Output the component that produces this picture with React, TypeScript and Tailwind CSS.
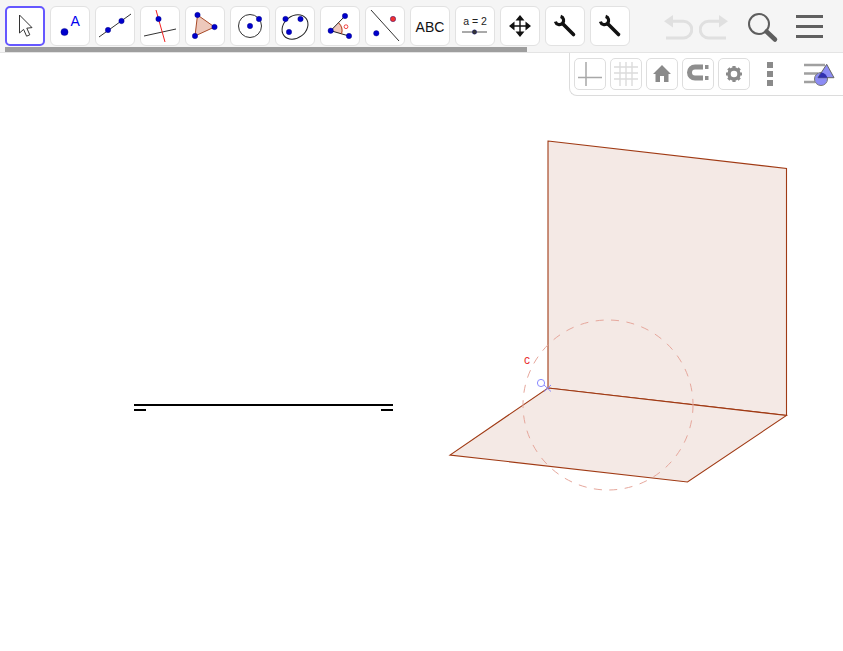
import React from "react";

const B = "#0000cc";
const Dot = ({ x, y, r = 2.7, c = B }: { x: number; y: number; r?: number; c?: string }) => (
  <circle cx={x} cy={y} r={r} fill={c} stroke="#00007a" strokeWidth={0.4} />
);

const Wrench = () => (
  <>
    <path d="M15.6 10.4 A4.2 4.2 0 1 1 10.4 15.6" fill="none" stroke="#111" strokeWidth={3.2} />
    <path d="M18 18 L28.5 28.5" stroke="#111" strokeWidth={3.6} strokeLinecap="round" />
  </>
);

const icons: React.ReactNode[] = [
  <path key="0" d="M14.5 9 L14.5 27 L18.6 23.4 L21.6 30.2 L24.8 28.8 L21.8 22.2 L27 21.6 Z" fill="#fff" stroke="#333" strokeWidth={1} strokeLinejoin="miter" />,
  <g key="1">
    <Dot x={14.5} y={26} r={3.6} />
    <text x={20.5} y={19.5} fontSize={14} fill="#0000ee" fontFamily="Liberation Sans, sans-serif">A</text>
  </g>,
  <g key="2">
    <path d="M4 31 L36 8" stroke="#333" strokeWidth={1} />
    <Dot x={13} y={24} />
    <Dot x={26.5} y={15} />
  </g>,
  <g key="3">
    <path d="M4 30 L36 23" stroke="#333" strokeWidth={1} />
    <path d="M16 4 L25 36" stroke="#f02020" strokeWidth={1} />
    <Dot x={18.5} y={13} />
  </g>,
  <g key="4">
    <path d="M12.5 9 L29.5 21 L10 30 Z" fill="#edc8bb" stroke="#a84a28" strokeWidth={1} />
    <Dot x={12.5} y={9} />
    <Dot x={29.5} y={21} />
    <Dot x={10} y={30} />
  </g>,
  <g key="5">
    <circle cx={20} cy={20} r={11.5} fill="none" stroke="#333" strokeWidth={1} />
    <Dot x={20} y={20} />
    <Dot x={29} y={13} />
  </g>,
  <g key="6">
    <ellipse cx={20} cy={21} rx={14} ry={11} fill="none" stroke="#222" strokeWidth={1} transform="rotate(-38 20 21)" />
    <Dot x={10.5} y={13} />
    <Dot x={25.5} y={13} />
    <Dot x={14} y={26} />
  </g>,
  <g key="7">
    <path d="M10.7 24.7 L19 16.5 A11 11 0 0 1 22 28 Z" fill="#f0c8bc" />
    <path d="M10.7 24.7 L25 10 M10.7 24.7 L29 30" stroke="#222" strokeWidth={1} />
    <path d="M18.5 16.8 A11 11 0 0 1 21.5 28" fill="none" stroke="#b04020" strokeWidth={1} />
    <Dot x={10.7} y={24.7} />
    <Dot x={25} y={10} />
    <Dot x={29} y={30} />
    <circle cx={26} cy={20.7} r={1.9} fill="none" stroke="#f03030" strokeWidth={0.9} />
  </g>,
  <g key="8">
    <path d="M6 4 L34 35" stroke="#333" strokeWidth={1} />
    <Dot x={28} y={13} c="#f03030" />
    <Dot x={11.3} y={27.3} />
  </g>,
  <text key="9" x={20} y={25.5} textAnchor="middle" fontSize={14} fill="#111" fontFamily="Liberation Sans, sans-serif">ABC</text>,
  <g key="10">
    <text x={20} y={19} textAnchor="middle" fontSize={10.5} fill="#222" fontFamily="Liberation Sans, sans-serif">a = 2</text>
    <path d="M7 26 L32 26" stroke="#555" strokeWidth={1} />
    <Dot x={19.5} y={26} c="#333" r={2.2} />
  </g>,
  <g key="11" fill="#111">
    <path d="M20 9 L24.5 14.5 L15.5 14.5 Z M20 31 L24.5 25.5 L15.5 25.5 Z M9 20 L14.5 15.5 L14.5 24.5 Z M31 20 L25.5 15.5 L25.5 24.5 Z" />
    <path d="M20 13 L20 27 M13 20 L27 20" stroke="#111" strokeWidth={1.4} />
  </g>,
  <Wrench key="12" />,
  <Wrench key="13" />,
];

const Undo = ({ flip }: { flip?: boolean }) => (
  <svg viewBox="0 0 30 26" className={flip ? "w-[30px] h-[26px] -scale-x-100" : "w-[30px] h-[26px]"}>
    <path d="M9 7.3 H20.5 A8.3 8.3 0 0 1 20.5 23.9 H3" fill="none" stroke="#e0e0e0" strokeWidth={3} />
    <path d="M1 7.3 L10 1 V13.6 Z" fill="#e0e0e0" />
  </svg>
);

const sub: React.ReactNode[] = [
  <path key="0" d="M4 19.5 H28 M12 4 V28" stroke="#a8a8a8" strokeWidth={1.5} fill="none" />,
  <path key="1" d="M4 9 H28 M4 15 H28 M4 21 H28 M10 4 V28 M16 4 V28 M22 4 V28" stroke="#dcdcdc" strokeWidth={1.4} fill="none" />,
  <path key="2" d="M16 7 L25 16 H22.5 V24 H18 V18 H14 V24 H9.5 V16 H7 Z" fill="#8a8a8a" />,
  <g key="3">
    <path d="M21 9 H13 A5.5 5.5 0 0 0 13 20 H21" fill="none" stroke="#8e8e8e" strokeWidth={5} />
    <path d="M23 7 H26.5 V11 H23 Z M23 18 H26.5 V22 H23 Z" fill="#8e8e8e" />
  </g>,
  <g key="4">
    <circle cx={16} cy={16} r={5} fill="none" stroke="#8a8a8a" strokeWidth={3.4} />
    <path d="M16 8 V10 M16 22 V24 M8 16 H10 M22 16 H24 M10.3 10.3 L11.8 11.8 M20.2 20.2 L21.7 21.7 M21.7 10.3 L20.2 11.8 M11.8 20.2 L10.3 21.7" stroke="#8a8a8a" strokeWidth={3.2} />
  </g>,
];

export default function App() {
  return (
    <div className="relative w-[843px] h-[651px] bg-white overflow-hidden">
      <div className="relative h-[53px] bg-[#f5f5f5] border-b border-[#e4e4e4] flex items-start pt-[6px] pl-[5px]">
        <div className="flex gap-[5px]">
          {icons.map((ic, i) => (
            <div
              key={i}
              className={
                i === 0
                  ? "w-10 h-10 rounded-[5px] bg-white border-2 border-[#6557ff]"
                  : "w-10 h-10 rounded-[6px] bg-white border border-[#e2e2e2]"
              }
            >
              <svg viewBox="0 0 40 40" className={i === 0 ? "w-10 h-10 -m-[2px]" : "w-10 h-10 -m-px"}>
                {ic}
              </svg>
            </div>
          ))}
        </div>
        <div className="ml-[33px] mt-[8px] flex gap-[6px]">
          <Undo />
          <Undo flip />
        </div>
        <svg viewBox="0 0 32 32" className="ml-[18px] mt-[7px] w-8 h-8">
          <circle cx={12} cy={11} r={10} fill="none" stroke="#5e5e5e" strokeWidth={2} />
          <path d="M19.5 18.5 L28 26.5" stroke="#5e5e5e" strokeWidth={4.5} strokeLinecap="round" />
        </svg>
        <div className="ml-[17px] mt-[9px] flex flex-col gap-[7px]">
          <div className="w-[27px] h-[3px] bg-[#606060]" />
          <div className="w-[27px] h-[3px] bg-[#606060]" />
          <div className="w-[27px] h-[3px] bg-[#606060]" />
        </div>
        <div className="absolute left-[5px] top-[47px] w-[522px] h-[5px] bg-[#9e9e9e]" />
      </div>

      <div className="relative h-[598px]">
        <svg viewBox="0 53 843 598" className="absolute inset-0 w-[843px] h-[598px]">
          <path d="M548 141 L786.5 168.5 L786.5 415.5 L548 388 Z" fill="#f4e9e5" stroke="#a03a14" strokeWidth={1.1} />
          <path d="M548 388 L786.5 415.5 L687.5 482 L450 455 Z" fill="#f4e9e5" stroke="#a03a14" strokeWidth={1.1} />
          <circle cx={608} cy={405} r={85} fill="none" stroke="#e6a79c" strokeWidth={1} strokeDasharray="8 7.5" />
          <path d="M134 405 H393" stroke="#000" strokeWidth={2} />
          <path d="M134 410 H146 M381 410 H393" stroke="#000" strokeWidth={2} />
          <text x={524} y={364} fontSize={12} fill="#e83030" fontFamily="Liberation Sans, sans-serif">c</text>
          <circle cx={541} cy={383} r={3.6} fill="none" stroke="#8a8aff" strokeWidth={1} />
          <path d="M544 385 L551 391.5 M551 385 L544 391.5" stroke="#8a8aff" strokeWidth={1} />
        </svg>

        <div className="absolute right-0 top-0 w-[274px] h-[43px] bg-white border-l border-b border-[#dcdcdc] rounded-bl-[8px] flex items-start pt-[5px] pl-[4px]">
          <div className="flex gap-1">
            {sub.map((s, i) => (
              <div key={i} className="w-8 h-8 rounded-[5px] bg-white border border-[#dedede]">
                <svg viewBox="0 0 32 32" className="w-8 h-8 -m-px">{s}</svg>
              </div>
            ))}
          </div>
          <div className="ml-[17px] mt-[4px] flex flex-col gap-[3px]">
            <div className="w-[6px] h-[6px] bg-[#8a8a8a]" />
            <div className="w-[6px] h-[6px] bg-[#8a8a8a]" />
            <div className="w-[6px] h-[6px] bg-[#8a8a8a]" />
          </div>
          <svg viewBox="0 0 32 32" className="ml-[30px] w-8 h-8">
            <defs>
              <clipPath id="tri">
                <path d="M23.7 6.3 L31 19.7 H15 Z" />
              </clipPath>
            </defs>
            <path d="M1 7 H22 M1 15.5 H15 M1 24 H12" stroke="#a0a0a0" strokeWidth={2.6} />
            <circle cx={18} cy={21} r={6.5} fill="#8c8cf5" stroke="#777" strokeWidth={1} />
            <path d="M23.7 6.3 L31 19.7 H15 Z" fill="#8c8cf5" stroke="#666" strokeWidth={1} />
            <circle cx={18} cy={21} r={6.5} fill="#3030b0" clipPath="url(#tri)" />
          </svg>
        </div>
      </div>
    </div>
  );
}
